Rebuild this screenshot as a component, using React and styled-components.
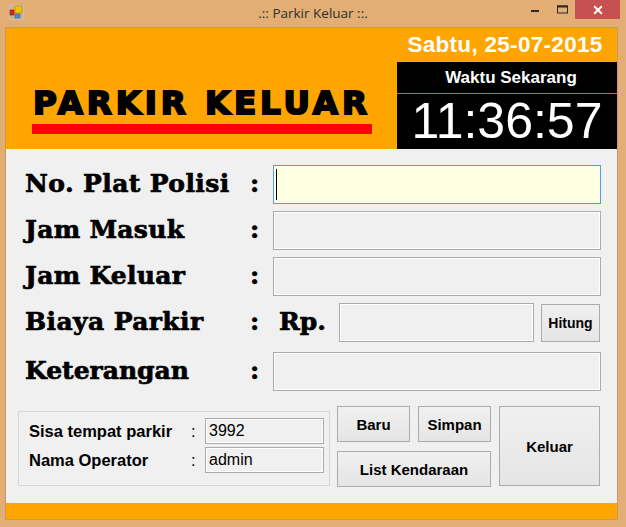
import React from "react";
import styled, { createGlobalStyle } from "styled-components";

const Global = createGlobalStyle`
  html, body { margin: 0; padding: 0; background: #E2AE74; }
  * { box-sizing: border-box; }
`;

const Window = styled.div`
  width: 626px;
  height: 527px;
  background: #E2AE74;
  display: flex;
  flex-direction: column;
  overflow: hidden;
`;

const TitleBar = styled.div`
  height: 27px;
  display: grid;
  grid-template-columns: 1fr auto 1fr;
  align-items: start;
`;

const TitleLeft = styled.div`
  padding: 5px 0 0 9px;
  display: flex;
`;

const TitleText = styled.div`
  font-family: "Open Sans", "Noto Sans", sans-serif;
  font-size: 13.5px;
  line-height: 26px;
  color: #2f2f2f;
  white-space: nowrap;
`;

const Controls = styled.div`
  display: flex;
  justify-content: flex-end;
  align-items: flex-start;
  padding-right: 6px;
`;

const CtlButton = styled.div`
  width: ${(p) => p.$w}px;
  height: 19px;
  display: flex;
  align-items: center;
  justify-content: center;
  background: ${(p) => (p.$close ? "#C75050" : "transparent")};
`;

const Client = styled.div`
  margin-left: 5px;
  width: 613px;
  height: 493px;
  border: 1px solid #C59A66;
  display: flex;
  flex-direction: column;
`;

const Header = styled.div`
  height: 121px;
  background: #FFA500;
  display: flex;
`;

const BrandArea = styled.div`
  flex: 1;
  display: flex;
  flex-direction: column;
  justify-content: flex-end;
  padding: 0 0 15px 26px;
`;

const Brand = styled.div`
  font-family: "DejaVu Sans", sans-serif;
  font-weight: 700;
  font-size: 32.5px;
  line-height: 33px;
  letter-spacing: 3.9px;
  color: #000;
  -webkit-text-stroke: 2px #000;
  margin-bottom: 4px;
  padding-left: 1px;
  white-space: nowrap;
`;

const RedBar = styled.div`
  width: 340px;
  height: 10px;
  background: #FF0000;
`;

const ClockPanel = styled.div`
  width: 220px;
  display: flex;
  flex-direction: column;
`;

const DateText = styled.div`
  height: 34px;
  line-height: 34px;
  text-align: center;
  font-family: "Liberation Sans", Arial, sans-serif;
  font-weight: 700;
  font-size: 22.5px;
  letter-spacing: 0.3px;
  padding-right: 4px;
  color: #fff;
  white-space: nowrap;
`;

const ClockBox = styled.div`
  flex: 1;
  background: #000;
  display: flex;
  flex-direction: column;
`;

const ClockCaption = styled.div`
  height: 31px;
  line-height: 31px;
  text-align: center;
  padding-left: 8px;
  font-family: "Liberation Sans", Arial, sans-serif;
  font-weight: 700;
  font-size: 17px;
  color: #fff;
`;

const ClockTime = styled.div`
  flex: 1;
  border-top: 1px solid #B77A00;
  line-height: 55px;
  text-align: center;
  font-family: "Liberation Sans", Arial, sans-serif;
  font-size: 50px;
  color: #fff;
  white-space: nowrap;
`;

const Body = styled.div`
  flex: 1;
  background: #F0F0F0;
  padding: 16px 0 0 0;
  display: flex;
  flex-direction: column;
`;

const Row = styled.div`
  height: 39px;
  display: flex;
  align-items: center;
  padding-left: 19px;
  margin-top: ${(p) => p.$mt ?? 7}px;
`;

const BigLabel = styled.div`
  width: ${(p) => p.$w ?? 225}px;
  font-family: "DejaVu Serif", serif;
  font-weight: 700;
  font-size: 25px;
  line-height: 30px;
  letter-spacing: ${(p) => p.$ls ?? 0}px;
  color: #000;
  white-space: nowrap;
  -webkit-text-stroke: 0.7px #000;
  padding-left: ${(p) => p.$pl ?? 0}px;
  margin-top: -2px;
`;

const Colon = styled(BigLabel)`
  width: 23px;
`;

const Field = styled.div`
  width: ${(p) => p.$w}px;
  height: ${(p) => p.$h ?? 39}px;
  border: 1px solid ${(p) => (p.$focus ? "#569DE5" : "#ABABAB")};
  background: ${(p) => (p.$focus ? "#FFFFE1" : "#F0F0F0")};
  box-shadow: ${(p) => (p.$focus ? "none" : "inset 0 0 0 1px #fff")};
  display: flex;
  align-items: center;
  padding-left: ${(p) => p.$pl ?? 2}px;
  font-family: "Liberation Sans", Arial, sans-serif;
  font-size: 16px;
  color: #000;
`;

const Caret = styled.span`
  display: block;
  width: 1px;
  height: 31px;
  background: #000;
`;

const Button = styled.div`
  width: ${(p) => p.$w}px;
  height: ${(p) => p.$h}px;
  border: 1px solid #ACACAC;
  background: linear-gradient(#F0F0F0, #E5E5E5);
  display: flex;
  align-items: center;
  justify-content: center;
  font-family: "Liberation Sans", Arial, sans-serif;
  font-weight: 700;
  font-size: ${(p) => p.$fs ?? 15}px;
  color: #000;
  white-space: nowrap;
  align-self: ${(p) => p.$self ?? "auto"};
  margin-left: ${(p) => p.$ml ?? 0}px;
  grid-column: ${(p) => p.$span ?? "auto"};
`;

const Bottom = styled.div`
  margin-top: 15px;
  padding-left: 12px;
  display: flex;
  align-items: flex-start;
`;

const GroupBox = styled.div`
  margin-top: 5px;
  width: 312px;
  height: 75px;
  border: 1px solid #D7D7D7;
  padding: 6px 0 0 10px;
  display: grid;
  grid-template-columns: 162px 14px 119px;
  grid-auto-rows: 26px;
  row-gap: 3px;
  align-items: center;
`;

const SmallLabel = styled.div`
  font-family: "Liberation Sans", Arial, sans-serif;
  font-weight: ${(p) => (p.$regular ? 400 : 700)};
  font-size: 16.5px;
  color: #000;
  white-space: nowrap;
`;

const ButtonGrid = styled.div`
  margin-left: 7px;
  display: grid;
  grid-template-columns: 73px 73px;
  grid-template-rows: 36px 36px;
  column-gap: 8px;
  row-gap: 9px;
`;

const OrangeStrip = styled.div`
  height: 16px;
  background: #FFA500;
  margin-top: 16px;
`;

function AppIcon() {
  return (
    <svg width="15" height="15" viewBox="0 0 15 15">
      <rect x="0.5" y="0.5" width="14" height="14" fill="none" stroke="#B8C4CC" />
      <rect x="6" y="1" width="7" height="7" fill="#F2C200" stroke="#C89400" strokeWidth="0.8" />
      <rect x="1" y="5" width="4" height="5" fill="#D42A1E" stroke="#8E1810" strokeWidth="0.6" />
      <rect x="6" y="9" width="5" height="4" fill="#4A8DE0" stroke="#2C64B4" strokeWidth="0.6" />
    </svg>
  );
}

export default function App() {
  return (
    <>
      <Global />
      <Window>
        <TitleBar>
          <TitleLeft>
            <AppIcon />
          </TitleLeft>
          <TitleText>.:: Parkir Keluar ::.</TitleText>
          <Controls>
            <CtlButton $w={28}>
              <svg width="9" height="9" viewBox="0 0 9 9">
                <rect x="0" y="5" width="8" height="2" fill="#2a2a2a" />
              </svg>
            </CtlButton>
            <CtlButton $w={26}>
              <svg width="11" height="9" viewBox="0 0 11 9">
                <rect x="0.5" y="1" width="10" height="7" fill="none" stroke="#2a2a2a" strokeWidth="1" />
                <rect x="0" y="0.5" width="11" height="2" fill="#2a2a2a" />
              </svg>
            </CtlButton>
            <CtlButton $w={45} $close>
              <svg width="10" height="10" viewBox="0 0 10 10">
                <path d="M1.2 1.2 L8.8 8.8 M8.8 1.2 L1.2 8.8" stroke="#fff" strokeWidth="2" />
              </svg>
            </CtlButton>
          </Controls>
        </TitleBar>
        <Client>
          <Header>
            <BrandArea>
              <Brand>PARKIR KELUAR</Brand>
              <RedBar />
            </BrandArea>
            <ClockPanel>
              <DateText>Sabtu, 25-07-2015</DateText>
              <ClockBox>
                <ClockCaption>Waktu Sekarang</ClockCaption>
                <ClockTime>11:36:57</ClockTime>
              </ClockBox>
            </ClockPanel>
          </Header>
          <Body>
            <Row $mt={0}>
              <BigLabel $ls={0.4}>No. Plat Polisi</BigLabel>
              <Colon>:</Colon>
              <Field $w={328} $focus>
                <Caret />
              </Field>
            </Row>
            <Row>
              <BigLabel $ls={0.3}>Jam Masuk</BigLabel>
              <Colon>:</Colon>
              <Field $w={328} />
            </Row>
            <Row>
              <BigLabel $ls={0.3}>Jam Keluar</BigLabel>
              <Colon>:</Colon>
              <Field $w={328} />
            </Row>
            <Row>
              <BigLabel $ls={0.4}>Biaya Parkir</BigLabel>
              <Colon>:</Colon>
              <BigLabel $w={66} $pl={6}>Rp.</BigLabel>
              <Field $w={195} />
              <Button $w={59} $h={38} $fs={14} $ml={7} $self="flex-end">Hitung</Button>
            </Row>
            <Row $mt={10}>
              <BigLabel>Keterangan</BigLabel>
              <Colon>:</Colon>
              <Field $w={328} />
            </Row>
            <Bottom>
              <GroupBox>
                <SmallLabel>Sisa tempat parkir</SmallLabel>
                <SmallLabel $regular>:</SmallLabel>
                <Field $w={119} $h={26} $pl={3}>3992</Field>
                <SmallLabel>Nama Operator</SmallLabel>
                <SmallLabel $regular>:</SmallLabel>
                <Field $w={119} $h={26} $pl={3}>admin</Field>
              </GroupBox>
              <ButtonGrid>
                <Button $w={73} $h={36}>Baru</Button>
                <Button $w={73} $h={36}>Simpan</Button>
                <Button $w={154} $h={36} $span="1 / span 2">List Kendaraan</Button>
              </ButtonGrid>
              <Button $w={101} $h={80} $ml={8}>Keluar</Button>
            </Bottom>
            <OrangeStrip />
          </Body>
        </Client>
      </Window>
    </>
  );
}
